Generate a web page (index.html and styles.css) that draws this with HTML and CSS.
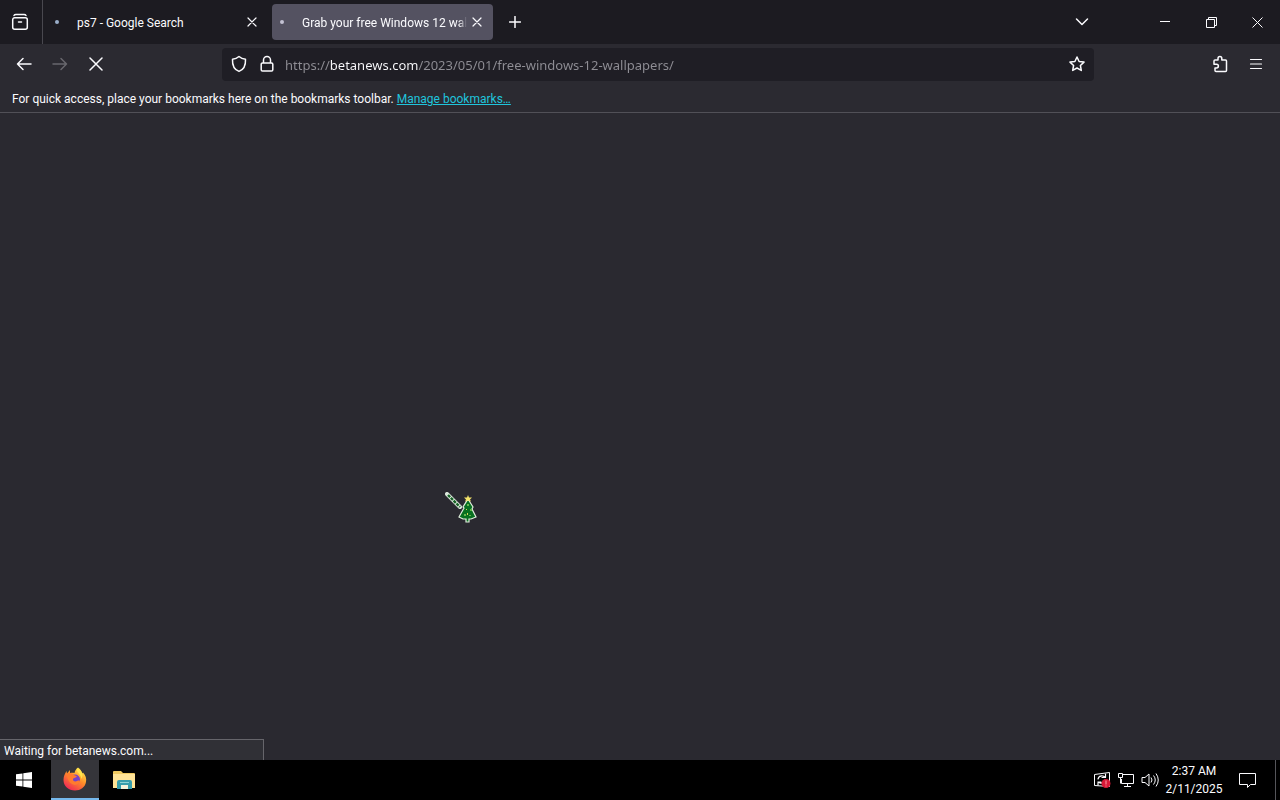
FILE: index.html
```html
<!DOCTYPE html>
<html lang="en">
<head>
<meta charset="utf-8">
<title>Grab your free Windows 12 wallpapers</title>
<link rel="stylesheet" href="styles.css">
</head>
<body>
<div class="desktop">
  <header class="browser">
    <div class="tabstrip">
      <button class="view" aria-label="Firefox View"><svg width="18" height="18" viewBox="0 0 18 18"><path d="M3.700 4.700h10.600a2 2 0 0 1 2 2v7.600a2 2 0 0 1-2 2H3.700a2 2 0 0 1-2-2V6.700a2 2 0 0 1 2-2zM7.500 9h3" class="line"/><path d="M3 2.500q.5-1 2-1h8q1.500 0 2 1" class="line"/></svg></button>
      <div class="tab">
        <span class="dot"></span><span class="label">ps7 - Google Search</span>
        <button class="close" aria-label="Close tab"><svg width="10" height="10" viewBox="0 0 10 10"><path d="M1 1l8 8M9 1l-8 8" class="thin"/></svg></button>
      </div>
      <div class="tab active">
        <span class="dot"></span><span class="label">Grab your free Windows 12 wallpapers</span>
        <button class="close" aria-label="Close tab"><svg width="10" height="10" viewBox="0 0 10 10"><path d="M1 1l8 8M9 1l-8 8" class="thin"/></svg></button>
      </div>
      <button class="newtab" aria-label="New tab"><svg width="12" height="12" viewBox="0 0 12 12"><path d="M6 .5v11M.5 6h11" class="line"/></svg></button>
      <button class="list" aria-label="List all tabs"><svg width="14" height="10" viewBox="0 0 14 10"><path d="M1.500 2L7 7.500 12.500 2" class="line"/></svg></button>
      <div class="window-buttons">
        <button aria-label="Minimize"><svg width="11" height="11" viewBox="0 0 11 11"><path d="M0 4.500h10" class="hair"/></svg></button>
        <button aria-label="Restore"><svg width="11" height="11" viewBox="0 0 11 11"><path d="M.5 2.500h8v8h-8zM2.500 2.500v-2h8v8h-2" class="hair"/></svg></button>
        <button aria-label="Close"><svg width="11" height="11" viewBox="0 0 11 11"><path d="M.5.5l10 10M10.500.5l-10 10" class="hair"/></svg></button>
      </div>
    </div>
    <div class="toolbar">
      <div class="nav">
        <button aria-label="Back"><svg width="16" height="16" viewBox="0 0 16 16"><path d="M15 8H1.500M7 2.500L1.500 8 7 13.500" class="line"/></svg></button>
        <button aria-label="Forward" disabled><svg width="16" height="16" viewBox="0 0 16 16"><path d="M1 8h13.500M9 2.500L14.500 8 9 13.500" class="line"/></svg></button>
        <button aria-label="Stop"><svg width="14" height="14" viewBox="0 0 14 14"><path d="M1 1l12 12M13 1L1 13" class="line"/></svg></button>
      </div>
      <div class="urlbar">
        <svg width="16" height="18" viewBox="0 0 16 18"><path d="M8 1.500C6 3.300 3.700 4 1.500 4.200 1.200 10 3 14.500 8 16.400 13 14.500 14.800 10 14.500 4.200 12.300 4 10 3.300 8 1.500z" class="line"/></svg>
        <svg width="16" height="18" viewBox="0 0 16 18"><path d="M3.500 8h9a1.300 1.300 0 0 1 1.300 1.300v5.400A1.300 1.300 0 0 1 12.500 16h-9a1.300 1.300 0 0 1-1.300-1.300V9.300A1.300 1.300 0 0 1 3.500 8zM4.500 8V5a3.500 3.500 0 0 1 7 0v3" class="line"/></svg>
        <input class="url" type="text" aria-label="Address" value="https://betanews.com/2023/05/01/free-windows-12-wallpapers/">
        <button class="star" aria-label="Bookmark this page"><svg width="16" height="16" viewBox="0 0 16 16"><path d="M8 1l2.100 4.500 4.900.6-3.600 3.400.9 4.900L8 12l-4.300 2.400.9-4.900L1 6.100l4.900-.6z" class="line"/></svg></button>
      </div>
      <div class="tools">
        <button aria-label="Extensions"><svg width="16" height="18" viewBox="0 0 16 18"><path d="M3 5h3V3.500a1.900 1.900 0 0 1 3.800 0V5h3.700q1 0 1 1v9.500q0 1-1 1H4q-1 0-1-1V13h1.500a1.900 1.900 0 0 0 0-3.800H2V6q0-1 1-1z" class="line"/></svg></button>
        <button aria-label="Open application menu"><svg width="14" height="12" viewBox="0 0 14 12"><path d="M1.500 1.500h11M1.500 6h11M1.500 10.500h11" class="thin"/></svg></button>
      </div>
    </div>
    <div class="bookmarks">For quick access, place your bookmarks here on the bookmarks toolbar. <a href="#">Manage bookmarks…</a></div>
  </header>
  <main class="page">
    <svg class="cursor" width="34" height="34" viewBox="0 0 34 34">
      <path d="M2 2l13 13" stroke="#dce8dc" stroke-width="4" stroke-linecap="round"/><path d="M3 3l12 12" stroke="#176326" stroke-width="2.400" stroke-dasharray="3 1"/>
      <path d="M23 7l5 8-1 2 4 8-5 2h-2v3h-3v-3h-3l-4-2 5-9-1-1z" fill="#087020" stroke="#e0eddc" stroke-width="1.200"/>
      <path d="M23 3l1 2.500h3l-2 2 1 2-3-1-3 1 1-2-2-2h3z" fill="#f4e46a"/>
      <path d="M22 12h2v2h-2zM25 17h2v2h-2zM19 22h2v2h-2zM24 23h2v1h-2z" fill="#63b84c"/><path d="M21 17h1v1h-1zM22 21h1v2h-1z" fill="#d5d454"/>
    </svg>
    <div class="status" role="status">Waiting for betanews.com...</div>
  </main>
  <footer class="taskbar">
    <button class="start" aria-label="Start"><svg width="16" height="16" viewBox="0 0 16 16" fill="#fff"><path d="M0 2.300l6.500-.9v6.200H0zM7.300 1.300L16 0v7.600H7.300zM0 8.400h6.500v6.200L0 13.700zM7.300 8.400H16V16l-8.700-1.300z"/></svg></button>
    <button class="task running" aria-label="Firefox"><svg width="24" height="24" viewBox="0 0 24 24">
      <defs><linearGradient id="fox" x1=".85" y1=".1" x2=".25" y2="1"><stop offset="0" stop-color="#ffe64a"/><stop offset=".45" stop-color="#ff8b28"/><stop offset="1" stop-color="#ef2558"/></linearGradient></defs>
      <path d="M15 .5c3 2 3.600 4 4 6l1-1c2.700 3 3.700 6 3 9.500C22 20.500 17.500 23.500 12 23.500 5.500 23.500.5 19 .5 13c0-4 1.500-6.500 3-9l.5 2.500L7 3v3c1.500-.5 3-.5 4.500 0C12 3.500 13 2 15 .5z" fill="url(#fox)"/>
      <circle cx="12" cy="12.500" r="5" fill="#7541c8"/><path d="M4 7c3-2 5-.5 7 1l3 1.200c-1 1.800-3.500 1.500-4 2.800-.5 2 2 3 4 2 2-.8 3-.3 3 .5-1.500 3-4.500 4-7 3C6 16 4 12 4 7z" fill="#ff7b2e"/><path d="M14 1c-2 4 5 6 4 11 2-2 2-5 .5-7.500C17 3 15.500 2 14 1z" fill="#ffe34b"/>
    </svg></button>
    <button class="task" aria-label="File Explorer"><svg width="22" height="20" viewBox="0 0 22 20"><path d="M0 2q0-1 1-1h7l2 2h11q1 0 1 1v14H0z" fill="#f0c95f"/><path d="M0 4h22v14H0z" fill="#ffe396"/><path d="M4 19v-7q0-2 2-2h11q2 0 2 2v7h-4v-4H8v4z" fill="#389eac"/><path d="M8 15h7v4H8z" fill="#f4f2da"/><path d="M7 12h9v1H7z" fill="#8bd2d5"/></svg></button>
    <div class="tray">
      <svg width="18" height="18" viewBox="0 0 18 18"><path d="M1.500 3.500l15-2v14l-15-1z" class="hair"/><path d="M5 8q1-4 5-3l2 1M12.500 3v3.500H9M12 9q-1 4-5 3l-2-1M5 14v-3h3" class="thin"/><circle cx="13" cy="12.500" r="4.500" fill="#d71937"/><path d="M13 9.500v4M13 14.500v1" stroke="#ff9ba5"/></svg>
      <svg width="18" height="16" viewBox="0 0 18 16"><path d="M5.500 2.500h11v9H4.500V7M10.500 11.500v3M7 14.500h7M1.500 1.500h4v4h-4zM3.500 5.500v6" class="hair"/></svg>
      <svg width="18" height="16" viewBox="0 0 18 16"><path d="M1 5.500h3l4-3.500v12l-4-3.500H1zM10 5.500q2 2.500 0 5M12.500 3.500q3.500 4.500 0 9M15 1.500q4.500 6.500 0 13" class="hair"/></svg>
    </div>
    <div class="clock"><time>2:37 AM</time><time>2/11/2025</time></div>
    <button class="notify" aria-label="Notifications"><svg width="17" height="17" viewBox="0 0 17 17"><path d="M.5 1.500h16v11h-5l-3 3v-3h-8z" class="hair"/></svg></button>
  </footer>
</div>
</body>
</html>
```
FILE: styles.css
```css
* { box-sizing: border-box; }
body { margin: 0; background: #2a2930; color: #fbfbfe; font: 12px/16px Roboto, "Noto Sans", sans-serif; }
button { display: flex; align-items: center; justify-content: center; flex: none; margin: 0; padding: 0; border: 0; background: none; color: inherit; font: inherit; }
svg { display: block; flex: none; }
.line, .thin, .hair { fill: none; stroke: currentColor; stroke-width: 1.500; stroke-linejoin: round; stroke-linecap: round; }
.thin { stroke-width: 1.200; }
.hair { stroke-width: 1; stroke-linecap: butt; stroke-linejoin: miter; }
.desktop { display: flex; flex-direction: column; min-height: 100vh; }
.browser { border-bottom: 1px solid #515057; background: #2b2a31; }
.tabstrip { display: flex; align-items: center; height: 44px; background: #1c1b21; }
.view { width: 43px; height: 44px; padding-right: 2px; border-right: 1px solid #49484f; }
.tab { display: flex; align-items: center; width: 221px; height: 36px; margin-left: 4px; padding: 0 6px 0 8px; border-radius: 4px; }
.tab.active { background: #545261; }
.dot { width: 4px; height: 4px; margin-right: 18px; border-radius: 2px; background: #9aaec9; }
.active .dot { background: #c3c2d2; }
.label { flex: 1; overflow: hidden; padding-top: 2px; white-space: nowrap; }
.active .label { mask-image: linear-gradient(to left, transparent, #000 8px); }
.close { width: 20px; height: 24px; }
.newtab { width: 36px; height: 36px; margin-left: 4px; }
.list { width: 36px; height: 36px; margin-left: auto; }
.window-buttons { display: flex; margin-left: 42px; }
.window-buttons button { width: 46px; height: 44px; }
.toolbar { display: grid; grid-template-columns: 222px 1fr 186px; align-items: center; height: 40px; }
.nav { display: flex; padding-left: 6px; }
.nav button, .tools button { width: 36px; height: 32px; }
.nav button:disabled { color: #68676d; }
.urlbar { display: flex; align-items: center; gap: 12px; height: 33px; padding: 0 8px 0 9px; border-radius: 4px; background: #1f1e25; }
.url { flex: 1; min-width: 0; height: 28px; margin: 0 0 0 -2px; padding: 2px 0 0; border: 0; outline: 0; font: 13px/20px "Noto Sans", "Open Sans", sans-serif; color: transparent; background: linear-gradient(to right, #8f8e95 45px, #fbfbfe 45px 133px, #8f8e95 133px); background-clip: text; -webkit-background-clip: text; }
.star { width: 18px; height: 28px; }
.tools { display: flex; justify-content: flex-end; padding-right: 6px; }
.bookmarks { height: 28px; padding: 7px 12px 5px; white-space: nowrap; }
a { color: #20c4dc; }
.page { position: relative; display: flex; flex: 1; align-items: flex-end; background: #2a2930; }
.cursor { position: absolute; left: 445px; top: 379px; }
.status { width: 264px; height: 21px; padding: 3px 4px 1px; border: 1px solid #66656b; border-width: 1px 1px 0 0; background: #303036; white-space: nowrap; }
.taskbar { display: flex; align-items: center; height: 40px; padding-right: 4px; background: #000; }
.start { width: 48px; height: 40px; }
.task { width: 48px; height: 40px; }
.running { margin-left: 3px; margin-right: 1px; border-bottom: 2px solid #76b9ed; background: #35353a; }
.tray { display: flex; align-items: center; gap: 6px; margin-left: auto; }
.clock { display: flex; flex-direction: column; align-items: center; width: 70px; line-height: 18px; }
.notify { width: 36px; height: 40px; margin-right: 10px; }
.taskbar::after { content: ""; width: 1px; height: 40px; background: #55555a; }
```
